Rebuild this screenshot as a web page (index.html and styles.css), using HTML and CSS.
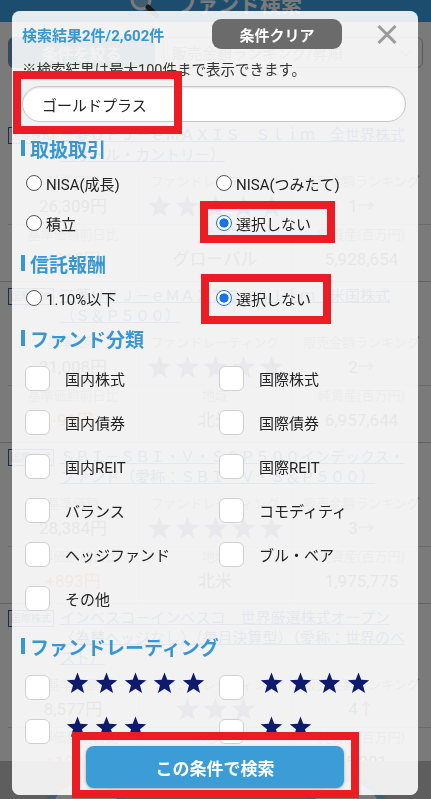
FILE: index.html
```html
<!DOCTYPE html>
<html lang="ja">
<head>
    <meta charset="UTF-8">
    <title>ファンド検索</title>
    <link rel="stylesheet" href="styles.css">
</head>
<body>
    <svg width="0" height="0" class="defs">
        <symbol id="star" viewBox="0 0 24 23">
            <polygon points="12,0.5 14.9,8.2 23.2,8.6 16.7,13.9 18.9,22 12,17.4 5.1,22 7.3,13.9 0.8,8.6 9.1,8.2"/>
        </symbol>
    </svg>

    <div class="page">
        <header class="app-header">
            <div class="app-title">
                <svg class="app-icon" viewBox="0 0 30 30">
                    <circle cx="12" cy="12" r="9" fill="rgba(255,255,255,0.35)" stroke="#fff" stroke-width="3"/>
                    <line x1="19" y1="19" x2="28" y2="28" stroke="#333" stroke-width="5" stroke-linecap="round"/>
                </svg>
                <span>ファンド検索</span>
            </div>
        </header>

        <div class="toolbar">
            <button class="narrow-btn">条件を絞る</button>
            <div class="sort-select">販売金額ランキング/昇順<span class="chev"></span></div>
        </div>

        <div class="fund-list">
            <div class="fund">
                <div class="fund-head">
                    <span class="tag">国際株式</span>
                    <a class="fund-name">三菱ＵＦＪ－ｅＭＡＸＩＳ　Ｓｌｉｍ　全世界株式（オール・カントリー）</a>
                </div>
                <div class="stats">
                    <div class="stat-row">
                        <div class="stat"><div class="stat-label">基準価額</div><div class="stat-value">26,309円</div></div>
                        <div class="stat"><div class="stat-label">ファンドレーティング</div>
                            <div class="rating">
                                <svg><use href="#star"/></svg><svg><use href="#star"/></svg><svg><use href="#star"/></svg><svg><use href="#star"/></svg><svg><use href="#star"/></svg>
                            </div>
                        </div>
                        <div class="stat"><div class="stat-label">販売金額ランキング</div><div class="stat-value">1<b class="arrow">→</b></div></div>
                    </div>
                    <div class="stat-row">
                        <div class="stat"><div class="stat-label">基準価額前日比</div><div class="stat-value up">+215円</div></div>
                        <div class="stat"><div class="stat-label">地域</div><div class="stat-value">グローバル</div></div>
                        <div class="stat"><div class="stat-label">純資産(百万円)</div><div class="stat-value">5,928,654</div></div>
                    </div>
                </div>
            </div>

            <div class="fund">
                <div class="fund-head">
                    <span class="tag">国際株式</span>
                    <a class="fund-name">三菱ＵＦＪ－ｅＭＡＸＩＳ　Ｓｌｉｍ　米国株式（Ｓ＆Ｐ５００）</a>
                </div>
                <div class="stats">
                    <div class="stat-row">
                        <div class="stat"><div class="stat-label">基準価額</div><div class="stat-value">31,008円</div></div>
                        <div class="stat"><div class="stat-label">ファンドレーティング</div>
                            <div class="rating">
                                <svg><use href="#star"/></svg><svg><use href="#star"/></svg><svg><use href="#star"/></svg><svg><use href="#star"/></svg><svg><use href="#star"/></svg>
                            </div>
                        </div>
                        <div class="stat"><div class="stat-label">販売金額ランキング</div><div class="stat-value">2<b class="arrow">→</b></div></div>
                    </div>
                    <div class="stat-row">
                        <div class="stat"><div class="stat-label">基準価額前日比</div><div class="stat-value up">-96円</div></div>
                        <div class="stat"><div class="stat-label">地域</div><div class="stat-value">北米</div></div>
                        <div class="stat"><div class="stat-label">純資産(百万円)</div><div class="stat-value">6,957,644</div></div>
                    </div>
                </div>
            </div>

            <div class="fund">
                <div class="fund-head">
                    <span class="tag">国際株式</span>
                    <a class="fund-name">ＳＢＩ－ＳＢＩ・Ｖ・Ｓ＆Ｐ５００インデックス・ファンド（愛称：ＳＢＩ・Ｖ・Ｓ＆Ｐ５００）</a>
                </div>
                <div class="stats">
                    <div class="stat-row">
                        <div class="stat"><div class="stat-label">基準価額</div><div class="stat-value">28,384円</div></div>
                        <div class="stat"><div class="stat-label">ファンドレーティング</div>
                            <div class="rating">
                                <svg><use href="#star"/></svg><svg><use href="#star"/></svg><svg><use href="#star"/></svg><svg><use href="#star"/></svg><svg><use href="#star"/></svg>
                            </div>
                        </div>
                        <div class="stat"><div class="stat-label">販売金額ランキング</div><div class="stat-value">3<b class="arrow">→</b></div></div>
                    </div>
                    <div class="stat-row">
                        <div class="stat"><div class="stat-label">基準価額前日比</div><div class="stat-value up">+893円</div></div>
                        <div class="stat"><div class="stat-label">地域</div><div class="stat-value">北米</div></div>
                        <div class="stat"><div class="stat-label">純資産(百万円)</div><div class="stat-value">1,975,775</div></div>
                    </div>
                </div>
            </div>

            <div class="fund">
                <div class="fund-head">
                    <span class="tag">国際株式</span>
                    <a class="fund-name">インベスコ－インベスコ　世界厳選株式オープン〈為替ヘッジなし〉（毎月決算型）（愛称：世界のベスト）</a>
                </div>
                <div class="stats">
                    <div class="stat-row">
                        <div class="stat"><div class="stat-label">基準価額</div><div class="stat-value">8,577円</div></div>
                        <div class="stat"><div class="stat-label">ファンドレーティング</div>
                            <div class="rating">
                                <svg><use href="#star"/></svg><svg><use href="#star"/></svg><svg><use href="#star"/></svg>
                            </div>
                        </div>
                        <div class="stat"><div class="stat-label">販売金額ランキング</div><div class="stat-value">4<b class="arrow up">↑</b></div></div>
                    </div>
                    <div class="stat-row">
                        <div class="stat"><div class="stat-label">基準価額前日比</div><div class="stat-value up">+192円</div></div>
                        <div class="stat"><div class="stat-label">地域</div><div class="stat-value">グローバル</div></div>
                        <div class="stat"><div class="stat-label">純資産(百万円)</div><div class="stat-value">45,201</div></div>
                    </div>
                </div>
            </div>
        </div>

        <nav class="bottom-nav">
            <span class="nav-circle left"></span>
            <span class="nav-circle right"></span>
        </nav>
    </div>

    <div class="modal">
        <div class="modal-body">
            <div class="modal-head">
                <div class="result-count">検索結果2件/2,602件</div>
                <button class="clear-btn">条件クリア</button>
                <svg class="close-icon" viewBox="0 0 20 19">
                    <path d="M1.5 1 L18.5 18 M18.5 1 L1.5 18"/>
                </svg>
            </div>
            <p class="note">※検索結果は最大100件まで表示できます。</p>
            <input class="keyword" type="text" value="ゴールドプラス">

            <h2 class="sec-title">取扱取引</h2>
            <div class="radio-grid">
                <label class="radio-opt"><input type="radio" name="deal">NISA(成長)</label>
                <label class="radio-opt"><input type="radio" name="deal">NISA(つみたて)</label>
                <label class="radio-opt"><input type="radio" name="deal">積立</label>
                <label class="radio-opt"><input type="radio" name="deal" checked>選択しない</label>
            </div>

            <h2 class="sec-title tight">信託報酬</h2>
            <div class="radio-grid">
                <label class="radio-opt"><input type="radio" name="fee">1.10%以下</label>
                <label class="radio-opt"><input type="radio" name="fee" checked>選択しない</label>
            </div>

            <h2 class="sec-title tight">ファンド分類</h2>
            <div class="check-grid">
                <label class="check-opt"><input type="checkbox">国内株式</label>
                <label class="check-opt"><input type="checkbox">国際株式</label>
                <label class="check-opt"><input type="checkbox">国内債券</label>
                <label class="check-opt"><input type="checkbox">国際債券</label>
                <label class="check-opt"><input type="checkbox">国内REIT</label>
                <label class="check-opt"><input type="checkbox">国際REIT</label>
                <label class="check-opt"><input type="checkbox">バランス</label>
                <label class="check-opt"><input type="checkbox">コモディティ</label>
                <label class="check-opt"><input type="checkbox">ヘッジファンド</label>
                <label class="check-opt"><input type="checkbox">ブル・ベア</label>
                <label class="check-opt"><input type="checkbox">その他</label>
            </div>

            <h2 class="sec-title">ファンドレーティング</h2>
            <div class="check-grid rate-grid">
                <label class="check-opt"><input type="checkbox">
                    <span class="stars"><svg><use href="#star"/></svg><svg><use href="#star"/></svg><svg><use href="#star"/></svg><svg><use href="#star"/></svg><svg><use href="#star"/></svg></span>
                </label>
                <label class="check-opt"><input type="checkbox">
                    <span class="stars"><svg><use href="#star"/></svg><svg><use href="#star"/></svg><svg><use href="#star"/></svg><svg><use href="#star"/></svg></span>
                </label>
                <label class="check-opt"><input type="checkbox">
                    <span class="stars"><svg><use href="#star"/></svg><svg><use href="#star"/></svg><svg><use href="#star"/></svg></span>
                </label>
                <label class="check-opt"><input type="checkbox">
                    <span class="stars"><svg><use href="#star"/></svg><svg><use href="#star"/></svg></span>
                </label>
                <label class="check-opt"><input type="checkbox">
                    <span class="stars"><svg><use href="#star"/></svg></span>
                </label>
            </div>
        </div>
        <div class="modal-foot">
            <button class="search-btn">この条件で検索</button>
        </div>
    </div>

    <div class="mark mark-keyword"></div>
    <div class="mark mark-deal"></div>
    <div class="mark mark-fee"></div>
    <div class="mark mark-search"></div>
</body>
</html>
```

FILE: styles.css
```css
* {
    box-sizing: border-box;
}
html, body {
    margin: 0;
    height: 100%;
    overflow: hidden;
}
body {
    font-family: Roboto, "Noto Sans CJK JP", sans-serif;
    background-color: #fff;
    color: #333;
}
.defs {
    position: absolute;
}
.app-header {
    height: 22px;
    background-color: #3ea2e5;
    display: flex;
    justify-content: center;
    overflow: hidden;
}
.app-title {
    display: flex;
    align-items: center;
    gap: 17px;
    height: 30px;
    margin-top: -12px;
    color: #fff;
    font-size: 21px;
    font-weight: bold;
}
.app-icon {
    width: 30px;
    height: 30px;
}
.toolbar {
    height: 99px;
    padding: 15px 8px 0;
    display: flex;
    align-items: flex-start;
    gap: 8px;
}
.narrow-btn {
    width: 147px;
    height: 31px;
    border: none;
    border-radius: 6px;
    background-color: #6f9cbd;
    color: #fff;
    font: bold 16px "Noto Sans CJK JP", sans-serif;
}
.sort-select {
    flex: 1;
    height: 31px;
    padding: 0 8px;
    border: 1px solid #bbb;
    border-radius: 6px;
    display: flex;
    align-items: center;
    justify-content: space-between;
    font-size: 15px;
    color: #888;
}
.chev {
    width: 8px;
    height: 8px;
    margin: -4px 4px 0 0;
    border-right: 1px solid #999;
    border-bottom: 1px solid #999;
    transform: rotate(45deg);
}
.fund {
    padding: 4px 8px 0;
    border-bottom: 1px solid #ccc;
}
.fund-head {
    display: flex;
    gap: 6px;
    padding-right: 4px;
}
.tag {
    flex: none;
    width: 46px;
    height: 17px;
    margin-top: 2px;
    border: 1px solid #3b5b9a;
    color: #3b5b9a;
    font-size: 10px;
    line-height: 15px;
    text-align: center;
}
.fund-name {
    font-size: 15px;
    line-height: 20px;
    color: #4060b8;
    text-decoration: underline;
}
.stats {
    margin: 4px -8px 0 0;
}
.stat-row {
    display: flex;
}
.stat-row + .stat-row {
    border-top: 1px solid #ddd;
}
.stat {
    padding: 5px 0;
    text-align: center;
}
.stat-row + .stat-row .stat {
    padding: 2px 0 9px;
}
.stat:nth-child(1) {
    width: 130px;
}
.stat:nth-child(2) {
    width: 154px;
    border-left: 1px solid #ddd;
    border-right: 1px solid #ddd;
}
.stat:nth-child(3) {
    flex: 1;
}
.stat-label {
    font-size: 13px;
    line-height: 16px;
    color: #999;
}
.stat-value {
    margin-top: 3px;
    font-size: 17px;
    line-height: 26px;
    color: #555;
}
.stat-value.up,
.arrow.up {
    color: #f06a60;
}
.arrow {
    color: #999;
}
.rating {
    height: 26px;
    margin-top: 3px;
    display: flex;
    align-items: center;
    justify-content: center;
    gap: 3px;
}
.rating svg {
    width: 25px;
    height: 24px;
    fill: #7d86b8;
}
.bottom-nav {
    position: fixed;
    left: 0;
    right: 0;
    bottom: 0;
    height: 38px;
    padding: 14px 41px 0 42px;
    display: flex;
    justify-content: space-between;
    overflow: hidden;
    background-color: #c4c4c4;
}
.nav-circle {
    width: 88px;
    height: 88px;
    border-radius: 50%;
    border: 7px solid #8fc4e8;
    background-color: #fff;
}
.nav-circle.left {
    border-top-color: #f3b49a;
}

.modal {
    position: fixed;
    left: 12px;
    top: 11px;
    width: 406px;
    height: 784px;
    padding: 8px 12px 0 9px;
    border-radius: 8px;
    background-color: rgba(241, 241, 241, 0.93);
    box-shadow: 0 0 0 1000px rgba(0, 0, 0, 0.52);
    display: flex;
    flex-direction: column;
    overflow: hidden;
    color: #222;
}
.modal-body {
    flex: 1;
    overflow: hidden;
}
.modal-foot {
    padding: 1px 0 7px 65px;
}
.modal-head {
    height: 30px;
    display: flex;
    align-items: center;
}
.result-count {
    flex: 1;
    margin-left: 1px;
    font-size: 15px;
    font-weight: bold;
    color: #3797d3;
}
.clear-btn {
    width: 130px;
    height: 30px;
    border: none;
    border-radius: 9px;
    background-color: #6b6b6b;
    color: #fff;
    font: bold 15px "Noto Sans CJK JP", sans-serif;
}
.close-icon {
    width: 20px;
    height: 19px;
    margin: 0 9px 0 35px;
    fill: none;
    stroke: #9b9b9b;
    stroke-width: 3;
}
.note {
    margin: 12px 0 0 1px;
    font-size: 14.5px;
    line-height: 20px;
    color: #333;
}
.keyword {
    display: block;
    width: 384px;
    height: 36px;
    margin: 5px 0 0 1px;
    padding: 0 19px;
    border: 1px solid #c6c6c6;
    border-radius: 18px;
    background-color: #fff;
    box-shadow: inset 0 1px 2px rgba(0, 0, 0, 0.12);
    font: 15px Roboto, "Noto Sans CJK JP", sans-serif;
    color: #222;
    outline: none;
}
.sec-title {
    height: 24px;
    margin: 14px 0 0;
    display: flex;
    align-items: center;
    gap: 5px;
    font-size: 19px;
    font-weight: bold;
    color: #3797d3;
}
.sec-title.tight {
    margin-top: 8px;
}
.sec-title::before {
    content: "";
    width: 4px;
    height: 16px;
    background-color: #3797d3;
}
.radio-grid {
    margin-top: 3px;
    display: grid;
    grid-template-columns: 190px 1fr;
}
.radio-opt {
    height: 40px;
    padding-left: 5px;
    display: flex;
    align-items: center;
    gap: 4px;
    font-size: 15px;
}
.radio-opt input {
    appearance: none;
    flex: none;
    width: 16px;
    height: 16px;
    margin: 0;
    border: 1.3px solid #555;
    border-radius: 50%;
    background-color: #fff;
}
.radio-opt input:checked {
    border: 1.5px solid #1a73e8;
    background: radial-gradient(circle, #1a73e8 0 4.3px, #fff 4.9px);
}
.check-grid {
    margin-top: 6px;
    display: grid;
    grid-template-columns: 194px 1fr;
}
.rate-grid {
    margin-top: 7px;
}
.check-opt {
    height: 44px;
    padding-left: 4px;
    display: flex;
    align-items: center;
    gap: 15px;
    font-size: 15px;
}
.check-opt input {
    appearance: none;
    flex: none;
    width: 25px;
    height: 25px;
    margin: 0;
    border: 1.5px solid #d0d0d0;
    border-radius: 6px;
    background-color: #fff;
}
.rate-grid .check-opt {
    gap: 16px;
}
.stars {
    display: flex;
    gap: 6px;
    margin-bottom: 8px;
}
.stars svg {
    width: 23px;
    height: 22px;
    fill: #0e1a6b;
}
.search-btn {
    display: block;
    width: 258px;
    height: 42px;
    border: none;
    border-radius: 8px;
    background-color: #3b9cd6;
    box-shadow: 0 1px 3px rgba(0, 0, 0, 0.3);
    color: #fff;
    font: bold 17px "Noto Sans CJK JP", sans-serif;
}
.mark {
    position: fixed;
    border: 8px solid #ec1c24;
}
.mark-keyword {
    left: 13px;
    top: 71px;
    width: 169px;
    height: 63px;
}
.mark-deal {
    left: 200px;
    top: 201px;
    width: 135px;
    height: 42px;
}
.mark-fee {
    left: 201px;
    top: 274px;
    width: 130px;
    height: 50px;
}
.mark-search {
    left: 72px;
    top: 732px;
    width: 287px;
    height: 66px;
}
```
